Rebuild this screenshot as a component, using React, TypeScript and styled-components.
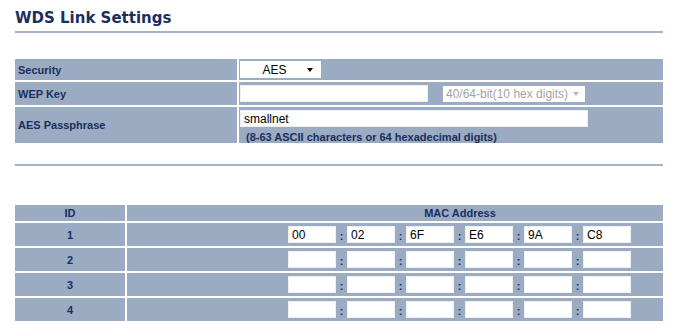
import * as React from 'react'
import styled, { createGlobalStyle } from 'styled-components'

const GlobalStyle = createGlobalStyle`
  body {
    margin: 0;
    background: #fff;
    font-family: "Liberation Sans", Arial, sans-serif;
  }
`

const navy = '#1b2f5e'
const cellBg = '#9aabc2'

const Page = styled.main`
  width: 648px;
  padding: 8px 15px 0 15px;
`

const Title = styled.h1`
  margin: 0;
  font-family: "DejaVu Sans", Verdana, sans-serif;
  font-size: 15px;
  line-height: 20px;
  font-weight: bold;
  color: ${navy};
`

const Divider = styled.div<{ $top: number }>`
  height: 2px;
  margin-top: ${p => p.$top}px;
  background: #a6b3c6;
`

const Grid = styled.div<{ $cols: string; $rows: string; $top: number }>`
  display: grid;
  grid-template-columns: ${p => p.$cols};
  grid-template-rows: ${p => p.$rows};
  gap: 2px;
  margin-top: ${p => p.$top}px;
`

const Label = styled.div`
  display: flex;
  align-items: center;
  padding-left: 3px;
  background: ${cellBg};
  color: ${navy};
  font-size: 11px;
  font-weight: bold;
`

const HeadCell = styled.div<{ $pad?: number }>`
  display: flex;
  align-items: center;
  justify-content: center;
  padding-left: ${p => p.$pad || 0}px;
  background: ${cellBg};
  color: ${navy};
  font-size: 11px;
  font-weight: bold;
`

const Value = styled.div<{ $padTop?: number; $column?: boolean }>`
  display: flex;
  flex-direction: ${p => (p.$column ? 'column' : 'row')};
  align-items: flex-start;
  padding: ${p => p.$padTop ?? 3}px 0 0 1px;
  background: ${cellBg};
`

const TextBox = styled.input<{ $w: number; $h?: number }>`
  box-sizing: border-box;
  width: ${p => p.$w}px;
  height: ${p => p.$h || 17}px;
  margin: 0;
  padding: 0 3px;
  border: 1px solid #eef0f3;
  background: #fff;
  font-family: "Liberation Sans", Arial, sans-serif;
  font-size: 12px;
  color: #000;
  outline: none;
`

const SelectBox = styled.div<{ $w: number; $h: number; $disabled?: boolean; $ml?: number }>`
  box-sizing: border-box;
  display: flex;
  align-items: center;
  width: ${p => p.$w}px;
  height: ${p => p.$h}px;
  margin-left: ${p => p.$ml || 0}px;
  margin-top: ${p => (p.$disabled ? 1 : 0)}px;
  background: #fff;
  font-size: 12px;
  color: ${p => (p.$disabled ? '#a3a3a3' : '#000')};
`

const SelectText = styled.span<{ $center?: boolean }>`
  flex: 1;
  text-align: ${p => (p.$center ? 'center' : 'left')};
  padding-left: ${p => (p.$center ? 6 : 3)}px;
  white-space: nowrap;
`

const Caret = styled.span<{ $disabled?: boolean }>`
  width: 0;
  height: 0;
  margin: 0 ${p => (p.$disabled ? 6 : 8)}px 0 4px;
  border-left: 3.5px solid transparent;
  border-right: 3.5px solid transparent;
  border-top: 4px solid ${p => (p.$disabled ? '#b8b8b8' : '#000')};
`

const Hint = styled.div`
  margin-top: 4px;
  padding-left: 6px;
  color: ${navy};
  font-size: 11px;
  font-weight: bold;
`

const MacCell = styled.div`
  display: flex;
  align-items: center;
  padding-left: 161px;
  background: ${cellBg};
`

const Colon = styled.span`
  width: 11px;
  padding-top: 3px;
  text-align: center;
  color: ${navy};
  font-size: 11px;
  font-weight: bold;
`

const macs: string[][] = [
  ['00', '02', '6F', 'E6', '9A', 'C8'],
  ['', '', '', '', '', ''],
  ['', '', '', '', '', ''],
  ['', '', '', '', '', ''],
]

export default function App() {
  return (
    <>
      <GlobalStyle />
      <Page>
        <Title>WDS Link Settings</Title>
        <Divider $top={3} />

        <Grid $cols="222px 424px" $rows="21px 23px 36px" $top={26}>
          <Label>Security</Label>
          <Value $padTop={2}>
            <SelectBox $w={81} $h={17}>
              <SelectText $center>AES</SelectText>
              <Caret />
            </SelectBox>
          </Value>

          <Label>WEP Key</Label>
          <Value>
            <TextBox $w={188} defaultValue="" />
            <SelectBox $w={142} $h={16} $ml={15} $disabled>
              <SelectText>40/64-bit(10 hex digits)</SelectText>
              <Caret $disabled />
            </SelectBox>
          </Value>

          <Label>AES Passphrase</Label>
          <Value $column>
            <TextBox $w={348} $h={18} defaultValue="smallnet" />
            <Hint>(8-63 ASCII characters or 64 hexadecimal digits)</Hint>
          </Value>
        </Grid>

        <Divider $top={21} />

        <Grid $cols="110px 536px" $rows="16px 23px 23px 23px 23px" $top={39}>
          <HeadCell>ID</HeadCell>
          <HeadCell $pad={130}>MAC Address</HeadCell>
          {macs.map((row, i) => (
            <React.Fragment key={i}>
              <HeadCell>{i + 1}</HeadCell>
              <MacCell>
                {row.map((part, j) => (
                  <React.Fragment key={j}>
                    {j > 0 && <Colon>:</Colon>}
                    <TextBox $w={48} defaultValue={part} />
                  </React.Fragment>
                ))}
              </MacCell>
            </React.Fragment>
          ))}
        </Grid>
      </Page>
    </>
  )
}
